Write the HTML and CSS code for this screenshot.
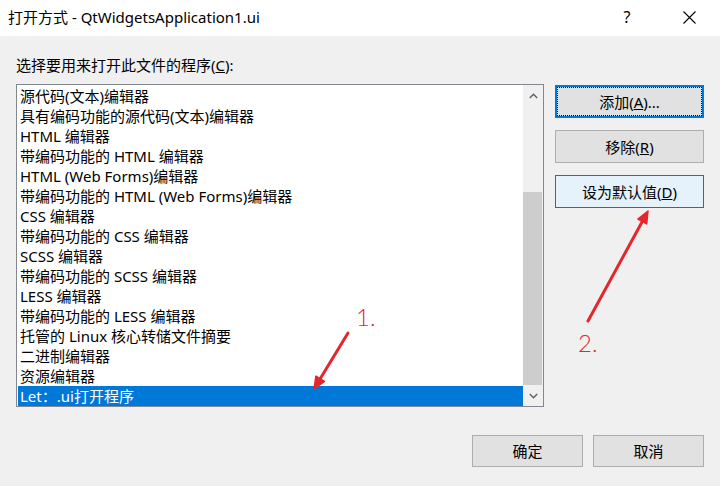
FILE: index.html
```html
<!DOCTYPE html>
<html lang="zh-CN">
<head>
<meta charset="utf-8">
<title>打开方式</title>
<link rel="stylesheet" href="styles.css">
</head>
<body>
<div class="window">
  <div class="titlebar">
    <span class="title">打开方式 - QtWidgetsApplication1.ui</span>
    <div class="tb-btns">
      <span class="tb-help">?</span>
      <span class="tb-close">
        <svg width="13" height="13" viewBox="0 0 13 13"><path d="M0.5 0.5 L12.5 12.5 M12.5 0.5 L0.5 12.5" stroke="#000" stroke-width="1.1" fill="none"/></svg>
      </span>
    </div>
  </div>
  <div class="content">
    <div class="label">选择要用来打开此文件的程序(<u>C</u>):</div>
    <div class="main">
      <div class="listbox">
        <ul class="items">
          <li>源代码(文本)编辑器</li>
          <li>具有编码功能的源代码(文本)编辑器</li>
          <li>HTML 编辑器</li>
          <li>带编码功能的 HTML 编辑器</li>
          <li>HTML (Web Forms)编辑器</li>
          <li>带编码功能的 HTML (Web Forms)编辑器</li>
          <li>CSS 编辑器</li>
          <li>带编码功能的 CSS 编辑器</li>
          <li>SCSS 编辑器</li>
          <li>带编码功能的 SCSS 编辑器</li>
          <li>LESS 编辑器</li>
          <li>带编码功能的 LESS 编辑器</li>
          <li>托管的 Linux 核心转储文件摘要</li>
          <li>二进制编辑器</li>
          <li>资源编辑器</li>
          <li class="selected">Let：.ui打开程序</li>
        </ul>
        <div class="vscroll">
          <div class="sb-btn">
            <svg width="9" height="6" viewBox="0 0 9 6"><path d="M0.8 5 L4.5 1.3 L8.2 5" stroke="#606060" stroke-width="1.4" fill="none"/></svg>
          </div>
          <div class="sb-track"><div class="sb-thumb"></div></div>
          <div class="sb-btn">
            <svg width="9" height="6" viewBox="0 0 9 6"><path d="M0.8 1 L4.5 4.7 L8.2 1" stroke="#606060" stroke-width="1.4" fill="none"/></svg>
          </div>
        </div>
      </div>
      <div class="side">
        <button class="btn btn-default">添加(<u>A</u>)...</button>
        <button class="btn">移除(<u>R</u>)</button>
        <button class="btn btn-hover">设为默认值(<u>D</u>)</button>
      </div>
    </div>
    <div class="footer">
      <button class="btn btn-foot">确定</button>
      <button class="btn btn-foot">取消</button>
    </div>
  </div>
  <svg class="annot" width="720" height="486" viewBox="0 0 720 486">
    <line x1="348" y1="333" x2="320.2" y2="378.7" stroke="#e4262d" stroke-width="3" stroke-linecap="round"/>
    <polygon points="314,389 324.5,381.3 315.9,376.1" fill="#e4262d" stroke="#e4262d" stroke-width="1.5" stroke-linejoin="round"/>
    <line x1="588" y1="321" x2="642.3" y2="221.5" stroke="#e4262d" stroke-width="3" stroke-linecap="round"/>
    <polygon points="648,211 646.7,223.9 637.9,219.1" fill="#e4262d" stroke="#e4262d" stroke-width="1.5" stroke-linejoin="round"/>
    <text x="356" y="326" class="annot-num" font-family="Lato, 'Noto Sans', sans-serif">1.</text>
    <text x="578" y="352" class="annot-num" font-family="Lato, 'Noto Sans', sans-serif">2.</text>
  </svg>
</div>
</body>
</html>
```
FILE: styles.css
```css
* { box-sizing: border-box; }
html, body { margin: 0; padding: 0; }
body {
  width: 720px;
  height: 486px;
  overflow: hidden;
  background: #f0f0f0;
  font-family: "Noto Sans", "Noto Sans CJK SC", sans-serif;
  font-size: 15px;
  color: #000;
}
.window {
  position: relative;
  width: 720px;
  height: 486px;
  background: #f0f0f0;
}
.titlebar {
  height: 36px;
  background: #fff;
  display: flex;
  align-items: center;
  justify-content: space-between;
  padding-left: 8px;
}
.title { font-size: 15px; line-height: 20px; margin-top: -2px; }
.tb-btns { display: flex; align-items: center; height: 36px; }
.tb-help {
  width: 46px;
  text-align: center;
  font-size: 16px;
  line-height: 20px;
  margin-right: 10px;
  margin-top: -2px;
}
.tb-close {
  width: 60px;
  height: 36px;
  display: flex;
  align-items: center;
  justify-content: center;
  padding-right: 2px;
  padding-bottom: 2px;
}
.content { padding: 19px 16px 0 16px; }
.label { line-height: 20px; height: 20px; }
.main { display: flex; margin-top: 9px; gap: 11px; align-items: flex-start; }
.listbox {
  width: 528px;
  height: 323px;
  border: 1px solid #828790;
  background: #fff;
  display: flex;
}
.items {
  list-style: none;
  margin: 0;
  padding: 1px 0 0 1px;
  flex: 1;
}
.items li {
  height: 20px;
  line-height: 20px;
  padding-left: 2px;
  white-space: nowrap;
}
.items li.selected { background: #0078d7; color: #fff; }
.vscroll {
  width: 20px;
  display: flex;
  flex-direction: column;
  background: #f0f0f0;
}
.sb-btn {
  height: 21px;
  display: flex;
  align-items: center;
  justify-content: center;
}
.sb-track { flex: 1; display: flex; flex-direction: column; justify-content: flex-end; }
.sb-thumb { height: 193px; background: #cdcdcd; margin-right: 1px; }
.side {
  display: flex;
  flex-direction: column;
  gap: 12px;
  margin-top: 1px;
}
.btn {
  font-family: inherit;
  font-size: 15px;
  color: #000;
  background: #e1e1e1;
  border: 1px solid #adadad;
  border-radius: 0;
  width: 149px;
  height: 33px;
  padding: 0;
  line-height: 20px;
}
.btn-default {
  border: 2px solid #0078d7;
  outline: 1px dotted #000;
  outline-offset: -3px;
}
.btn-hover { background: #e5f1fb; border-color: #0078d7; }
.footer {
  display: flex;
  justify-content: flex-end;
  gap: 10px;
  margin-top: 28px;
}
.btn-foot { width: 111px; height: 32px; }
.annot { position: absolute; left: 0; top: 0; pointer-events: none; }
.annot-num {
  font-family: Lato, "Noto Sans", sans-serif;
  font-weight: 300;
  font-size: 24px;
  fill: #e4262d;
}
```
